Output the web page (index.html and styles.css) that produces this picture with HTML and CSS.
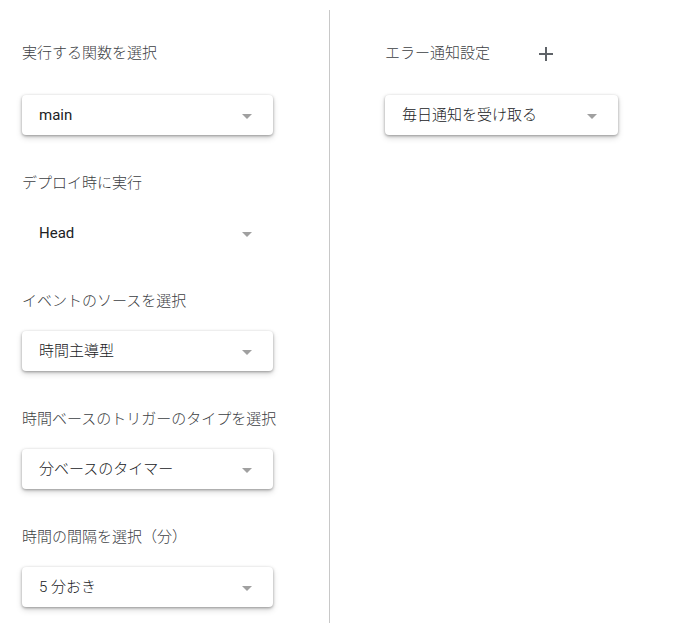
FILE: index.html
```html
<!DOCTYPE html>
<html lang="ja">
<head>
<meta charset="utf-8">
<link rel="stylesheet" href="styles.css">
</head>
<body>
<div class="page">
  <div class="col col-left">
    <div class="field first">
      <div class="label">実行する関数を選択</div>
      <div class="select card"><span class="value latin">main</span><span class="arrow"></span></div>
    </div>
    <div class="field">
      <div class="label">デプロイ時に実行</div>
      <div class="select flat"><span class="value latin">Head</span><span class="arrow"></span></div>
    </div>
    <div class="field">
      <div class="label">イベントのソースを選択</div>
      <div class="select card"><span class="value">時間主導型</span><span class="arrow"></span></div>
    </div>
    <div class="field">
      <div class="label">時間ベースのトリガーのタイプを選択</div>
      <div class="select card"><span class="value">分ベースのタイマー</span><span class="arrow"></span></div>
    </div>
    <div class="field">
      <div class="label">時間の間隔を選択（分）</div>
      <div class="select card"><span class="value">5 分おき</span><span class="arrow"></span></div>
    </div>
  </div>
  <div class="col col-right">
    <div class="field first">
      <div class="label-row">
        <span class="row-label">エラー通知設定</span>
        <button class="add" aria-label="追加">
          <svg width="14" height="14" viewBox="0 0 14 14"><path d="M7 0v14M0 7h14" stroke="#5f6368" stroke-width="2"/></svg>
        </button>
      </div>
      <div class="select card wide"><span class="value">毎日通知を受け取る</span><span class="arrow"></span></div>
    </div>
  </div>
</div>
</body>
</html>
```

FILE: styles.css
```css
html, body {
  margin: 0;
  padding: 0;
  background: #fff;
}
body {
  font-family: Roboto, "Noto Sans CJK JP", sans-serif;
  font-size: 15px;
  font-weight: 300;
  color: #3c4043;
}
.page {
  display: flex;
  margin-top: 10px;
  height: 613px;
}
.col-left {
  width: 307px;
  padding-left: 22px;
  border-right: 1px solid #c8c8c8;
}
.col-right {
  padding-left: 55px;
}
.field {
  margin-top: 38px;
}
.field.first {
  margin-top: 33px;
}
.label {
  line-height: 20px;
  height: 20px;
  color: #3c4043;
  margin-bottom: 20px;
}
.field.first .label {
  margin-bottom: 32px;
}
.label-row {
  display: flex;
  align-items: center;
  height: 20px;
  margin-bottom: 32px;
}
.row-label {
  line-height: 20px;
  color: #3c4043;
}
.add {
  margin-left: 36px;
  width: 40px;
  height: 40px;
  border: none;
  background: transparent;
  padding: 0;
  display: flex;
  align-items: center;
  justify-content: center;
  margin-top: 2px;
}
.select {
  box-sizing: border-box;
  width: 251px;
  height: 40px;
  display: flex;
  align-items: center;
  justify-content: space-between;
  padding: 0 21px 0 17px;
  border-radius: 4px;
  color: #202124;
}
.select.wide {
  width: 233px;
}
.card {
  background: #fff;
  box-shadow: 0 1px 3px rgba(0,0,0,0.35), 0 3px 6px rgba(0,0,0,0.15);
}
.value {
  line-height: 20px;
}
.value.latin {
  font-weight: 400;
}
.arrow {
  width: 0;
  height: 0;
  border-left: 5px solid transparent;
  border-right: 5px solid transparent;
  border-top: 5px solid #a0a0a0;
  margin-top: 2px;
}
```
